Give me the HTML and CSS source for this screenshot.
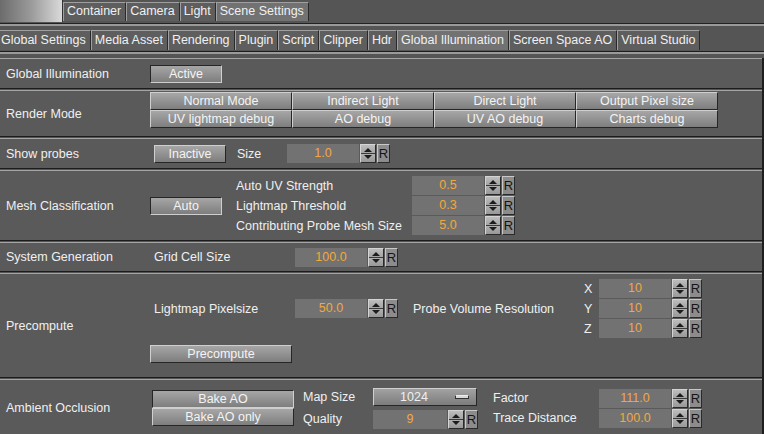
FILE: index.html
```html
<!DOCTYPE html>
<html>
<head>
<meta charset="utf-8">
<link rel="stylesheet" href="styles.css">
</head>
<body>
<div class="app">
  <div class="topbar">
    <div class="logo"></div>
    <div class="tab">Container</div>
    <div class="tab">Camera</div>
    <div class="tab">Light</div>
    <div class="tab active">Scene Settings</div>
  </div>
  <div class="tabbar2">
    <div class="tab">Global Settings</div>
    <div class="tab">Media Asset</div>
    <div class="tab">Rendering</div>
    <div class="tab">Plugin</div>
    <div class="tab">Script</div>
    <div class="tab">Clipper</div>
    <div class="tab">Hdr</div>
    <div class="tab active">Global Illumination</div>
    <div class="tab">Screen Space AO</div>
    <div class="tab">Virtual Studio</div>
  </div>
  <div class="panel">
    <section class="sec s1">
      <div class="lbl">Global Illumination</div>
      <button class="btn sunk w71">Active</button>
    </section>

    <section class="sec s2">
      <div class="lbl">Render Mode</div>
      <div class="modes">
        <button class="btn mode sel">Normal Mode</button>
        <button class="btn mode">Indirect Light</button>
        <button class="btn mode">Direct Light</button>
        <button class="btn mode">Output Pixel size</button>
        <button class="btn mode">UV lightmap debug</button>
        <button class="btn mode">AO debug</button>
        <button class="btn mode">UV AO debug</button>
        <button class="btn mode">Charts debug</button>
      </div>
    </section>

    <section class="sec s3">
      <div class="lbl">Show probes</div>
      <button class="btn w71 ml4">Inactive</button>
      <div class="plabel size-l">Size</div>
      <div class="num"><span class="field">1.0</span><span class="spin"><svg width="16" height="19" viewBox="0 0 16 19"><path d="M4 8 L8 4 L12 8 Z" fill="#1c1c1c"/><path d="M4 11 L8 15 L12 11 Z" fill="#1c1c1c"/></svg></span><span class="rbtn">R</span></div>
    </section>

    <section class="sec s4">
      <div class="lbl">Mesh Classification</div>
      <button class="btn sunk w71">Auto</button>
      <div class="rows">
        <div class="row"><div class="plabel w176">Auto UV Strength</div><div class="num"><span class="field">0.5</span><span class="spin"><svg width="16" height="19" viewBox="0 0 16 19"><path d="M4 8 L8 4 L12 8 Z" fill="#1c1c1c"/><path d="M4 11 L8 15 L12 11 Z" fill="#1c1c1c"/></svg></span><span class="rbtn">R</span></div></div>
        <div class="row"><div class="plabel w176">Lightmap Threshold</div><div class="num"><span class="field">0.3</span><span class="spin"><svg width="16" height="19" viewBox="0 0 16 19"><path d="M4 8 L8 4 L12 8 Z" fill="#1c1c1c"/><path d="M4 11 L8 15 L12 11 Z" fill="#1c1c1c"/></svg></span><span class="rbtn">R</span></div></div>
        <div class="row"><div class="plabel w176">Contributing Probe Mesh Size</div><div class="num"><span class="field">5.0</span><span class="spin"><svg width="16" height="19" viewBox="0 0 16 19"><path d="M4 8 L8 4 L12 8 Z" fill="#1c1c1c"/><path d="M4 11 L8 15 L12 11 Z" fill="#1c1c1c"/></svg></span><span class="rbtn">R</span></div></div>
      </div>
    </section>

    <section class="sec s5">
      <div class="lbl">System Generation</div>
      <div class="plabel w141 ml4">Grid Cell Size</div>
      <div class="num"><span class="field">100.0</span><span class="spin"><svg width="16" height="19" viewBox="0 0 16 19"><path d="M4 8 L8 4 L12 8 Z" fill="#1c1c1c"/><path d="M4 11 L8 15 L12 11 Z" fill="#1c1c1c"/></svg></span><span class="rbtn">R</span></div>
    </section>

    <section class="sec s6">
      <div class="lbl">Precompute</div>
      <div class="pc">
        <div class="pcrow">
          <div class="plabel w141 ml4">Lightmap Pixelsize</div>
          <div class="num"><span class="field">50.0</span><span class="spin"><svg width="16" height="19" viewBox="0 0 16 19"><path d="M4 8 L8 4 L12 8 Z" fill="#1c1c1c"/><path d="M4 11 L8 15 L12 11 Z" fill="#1c1c1c"/></svg></span><span class="rbtn">R</span></div>
          <div class="plabel pvr">Probe Volume Resolution</div>
          <div class="xyz">
            <div class="row"><div class="axis">X</div><div class="num"><span class="field">10</span><span class="spin"><svg width="16" height="19" viewBox="0 0 16 19"><path d="M4 8 L8 4 L12 8 Z" fill="#1c1c1c"/><path d="M4 11 L8 15 L12 11 Z" fill="#1c1c1c"/></svg></span><span class="rbtn">R</span></div></div>
            <div class="row"><div class="axis">Y</div><div class="num"><span class="field">10</span><span class="spin"><svg width="16" height="19" viewBox="0 0 16 19"><path d="M4 8 L8 4 L12 8 Z" fill="#1c1c1c"/><path d="M4 11 L8 15 L12 11 Z" fill="#1c1c1c"/></svg></span><span class="rbtn">R</span></div></div>
            <div class="row"><div class="axis">Z</div><div class="num"><span class="field">10</span><span class="spin"><svg width="16" height="19" viewBox="0 0 16 19"><path d="M4 8 L8 4 L12 8 Z" fill="#1c1c1c"/><path d="M4 11 L8 15 L12 11 Z" fill="#1c1c1c"/></svg></span><span class="rbtn">R</span></div></div>
          </div>
        </div>
        <button class="btn w142">Precompute</button>
      </div>
    </section>

    <section class="sec s7">
      <div class="lbl">Ambient Occlusion</div>
      <div class="bake">
        <button class="btn sunk w142">Bake AO</button>
        <button class="btn w142">Bake AO only</button>
      </div>
      <div class="aocol">
        <div class="row"><div class="plabel w70">Map Size</div><div class="drop">1024<span class="dropbar"></span></div></div>
        <div class="row"><div class="plabel w70">Quality</div><div class="num"><span class="field q">9</span><span class="spin"><svg width="16" height="19" viewBox="0 0 16 19"><path d="M4 8 L8 4 L12 8 Z" fill="#1c1c1c"/><path d="M4 11 L8 15 L12 11 Z" fill="#1c1c1c"/></svg></span><span class="rbtn">R</span></div></div>
      </div>
      <div class="aocol2">
        <div class="row"><div class="plabel w106">Factor</div><div class="num"><span class="field">111.0</span><span class="spin"><svg width="16" height="19" viewBox="0 0 16 19"><path d="M4 8 L8 4 L12 8 Z" fill="#1c1c1c"/><path d="M4 11 L8 15 L12 11 Z" fill="#1c1c1c"/></svg></span><span class="rbtn">R</span></div></div>
        <div class="row"><div class="plabel w106">Trace Distance</div><div class="num"><span class="field">100.0</span><span class="spin"><svg width="16" height="19" viewBox="0 0 16 19"><path d="M4 8 L8 4 L12 8 Z" fill="#1c1c1c"/><path d="M4 11 L8 15 L12 11 Z" fill="#1c1c1c"/></svg></span><span class="rbtn">R</span></div></div>
      </div>
    </section>
  </div>
</div>
</body>
</html>
```
FILE: styles.css
```css
* { box-sizing: border-box; }
html, body { margin: 0; padding: 0; }
body {
  width: 764px;
  height: 434px;
  overflow: hidden;
  background: #555555;
  font-family: "Liberation Sans", Arial, sans-serif;
  font-size: 12.5px;
  color: #f0f0f0;
}
.app { width: 764px; height: 434px; }

.topbar {
  display: flex;
  align-items: flex-end;
  height: 24px;
  border-bottom: 1px solid #222;
  box-shadow: 0 2px 0 #9a9a9a;
  background: #555;
}
.logo {
  width: 63px;
  height: 22px;
  align-self: flex-start;
  background: linear-gradient(to right, #6c6c6c 0%, #9a9a9a 50%, #dadada 100%);
  border-right: 1px solid #333;
}
.tab {
  height: 19px;
  line-height: 17px;
  padding: 0 4px 0 3px;
  background: #5e5e5e;
  border-top: 1px solid #a0a0a0;
  border-left: 1px solid #a0a0a0;
  border-right: 1px solid #2a2a2a;
  white-space: nowrap;
  margin-bottom: 2px;
}
.tab.active { background: #727272; }

.tabbar2 {
  display: flex;
  align-items: flex-end;
  height: 25px;
  margin-top: 3px;
  background: #555;
  border-bottom: 1px solid #1e1e1e;
  box-shadow: 0 2px 0 #9a9a9a;
}
.tabbar2 .tab { margin-bottom: 1px; height: 20px; line-height: 18px; }
.tabbar2 .tab:first-child { border-left: none; padding-left: 1px; }

.panel {
  margin-top: 6px;
  border-right: 2px solid #1e1e1e;
}
.sec {
  display: flex;
  align-items: center;
  background: #5a5a5a;
  border-top: 1px solid #a4a4a4;
  border-bottom: 1px solid #1c1c1c;
  margin-bottom: 1px;
}
.s1 { height: 31px; }
.s2 { height: 47px; align-items: flex-start; }
.s3 { height: 31px; }
.s4 { height: 71px; }
.s5 { height: 30px; }
.s6 { height: 105px; align-items: flex-start; }
.s7 { height: 58px; }

.lbl {
  width: 150px;
  flex: none;
  padding-left: 6px;
  white-space: nowrap;
}
.s2 .lbl, .s6 .lbl { align-self: center; }

.btn {
  font: inherit;
  color: #f4f4f4;
  height: 18px;
  padding: 0;
  text-align: center;
  background: linear-gradient(to bottom, #a6a6a6, #7e7e7e);
  border: 1px solid;
  border-color: #cfcfcf #262626 #262626 #cfcfcf;
  flex: none;
}
.btn.sunk { border-color: #262626 #cfcfcf #cfcfcf #262626; }
.w71 { width: 72px; }
.w142 { width: 142px; }
.ml4 { margin-left: 4px; }

.modes {
  display: grid;
  grid-template-columns: repeat(4, 142px);
  grid-auto-rows: 18px;
  padding-top: 1px;
}
.mode { width: 142px; }

.plabel { white-space: nowrap; flex: none; }
.size-l { margin-left: 11px; width: 50px; }
.w176 { width: 176px; }
.w141 { width: 141px; }
.w70 { width: 70px; }
.w106 { width: 106px; }

.num { display: flex; align-items: center; flex: none; }
.field {
  width: 72px;
  height: 19px;
  line-height: 19px;
  background: #727272;
  color: #f2a83e;
  text-align: center;
}
.field.q { width: 74px; }
.spin {
  width: 16px;
  height: 19px;
  margin-left: 1px;
  display: block;
  background: linear-gradient(to bottom, #bdbdbd 0%, #a4a4a4 48%, #3a3a3a 48%, #3a3a3a 53%, #b0b0b0 53%, #989898 100%);
  border: 1px solid #2a2a2a;
  border-top-color: #d4d4d4;
  border-left-color: #d4d4d4;
}
.spin svg { display: block; margin: -1px 0 0 -1px; }
.rbtn {
  width: 13px;
  height: 19px;
  margin-left: 1px;
  line-height: 17px;
  text-align: center;
  color: #151515;
  font-size: 13px;
  background: #8c8c8c;
  border: 1px solid #2a2a2a;
  border-top-color: #c8c8c8;
  border-left-color: #c8c8c8;
}

.rows { display: flex; flex-direction: column; gap: 1px; margin-left: 14px; }
.row { display: flex; align-items: center; height: 19px; }

.pc { display: flex; flex-direction: column; padding-top: 5px; }
.pcrow { display: flex; align-items: center; }
.pvr { margin-left: 15px; width: 171px; }
.xyz { display: flex; flex-direction: column; gap: 1px; }
.axis { width: 15px; }
.pc .w142 { margin-top: 7px; }

.bake { display: flex; flex-direction: column; margin-left: 2px; }
.aocol { display: flex; flex-direction: column; gap: 3px; margin-left: 9px; }
.aocol2 { display: flex; flex-direction: column; gap: 1px; margin-left: 15px; }
.drop {
  width: 104px;
  height: 18px;
  line-height: 16px;
  position: relative;
  padding-right: 22px;
  text-align: center;
  background: linear-gradient(to bottom, #a2a2a2, #7c7c7c);
  border: 1px solid;
  border-color: #cfcfcf #262626 #262626 #cfcfcf;
  display: flex;
  align-items: center;
  justify-content: center;
}
.dropbar {
  position: absolute;
  right: 7px;
  top: 6px;
  width: 14px;
  height: 4px;
  background: #d8d8d8;
  border: 1px solid #333;
  border-top-color: #eee;
}
```
